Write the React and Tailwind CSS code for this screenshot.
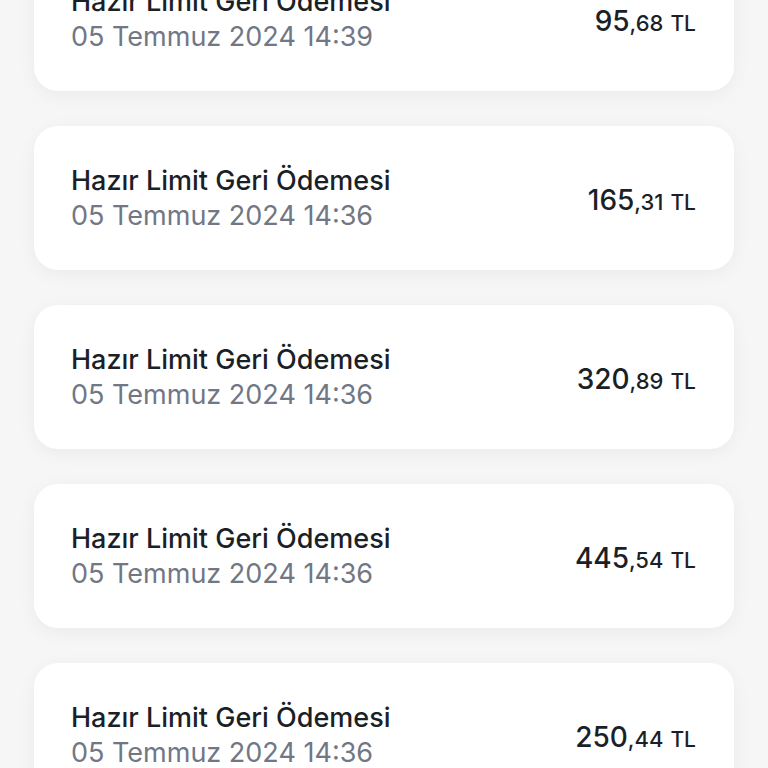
const odemeler = [
  { baslik: "Hazır Limit Geri Ödemesi", tarih: "05 Temmuz 2024 14:39", tam: "95", kurus: "68" },
  { baslik: "Hazır Limit Geri Ödemesi", tarih: "05 Temmuz 2024 14:36", tam: "165", kurus: "31" },
  { baslik: "Hazır Limit Geri Ödemesi", tarih: "05 Temmuz 2024 14:36", tam: "320", kurus: "89" },
  { baslik: "Hazır Limit Geri Ödemesi", tarih: "05 Temmuz 2024 14:36", tam: "445", kurus: "54" },
  { baslik: "Hazır Limit Geri Ödemesi", tarih: "05 Temmuz 2024 14:36", tam: "250", kurus: "44" },
];

export default function App() {
  return (
    <div
      className="bg-[#f6f6f7] min-h-screen h-[768px] overflow-hidden px-[34px]"
      style={{ fontFamily: "Inter, 'Noto Sans', sans-serif" }}
    >
      <div className="mt-[-53px] flex flex-col gap-[35px]">
        {odemeler.map((o, i) => (
          <div
            key={i}
            className="bg-white rounded-[24px] h-[144px] flex items-center justify-between pl-[37px] pr-[38px] shadow-[0_4px_18px_rgba(0,0,0,0.05)]"
          >
            <div className="flex flex-col">
              <span className="text-[27px] leading-[35px] font-medium text-[#1b1f27]">
                {o.baslik}
              </span>
              <span className="text-[27px] leading-[35px] text-[#717784]">
                {o.tarih}
              </span>
            </div>
            <div className="text-[#1b1f27] font-medium mt-[4px] flex items-baseline">
              <span className="text-[28px]">{o.tam}</span>
              <span className="text-[22px]">,{o.kurus}</span>
              <span className="text-[21px] ml-[7px]">TL</span>
            </div>
          </div>
        ))}
      </div>
    </div>
  );
}
